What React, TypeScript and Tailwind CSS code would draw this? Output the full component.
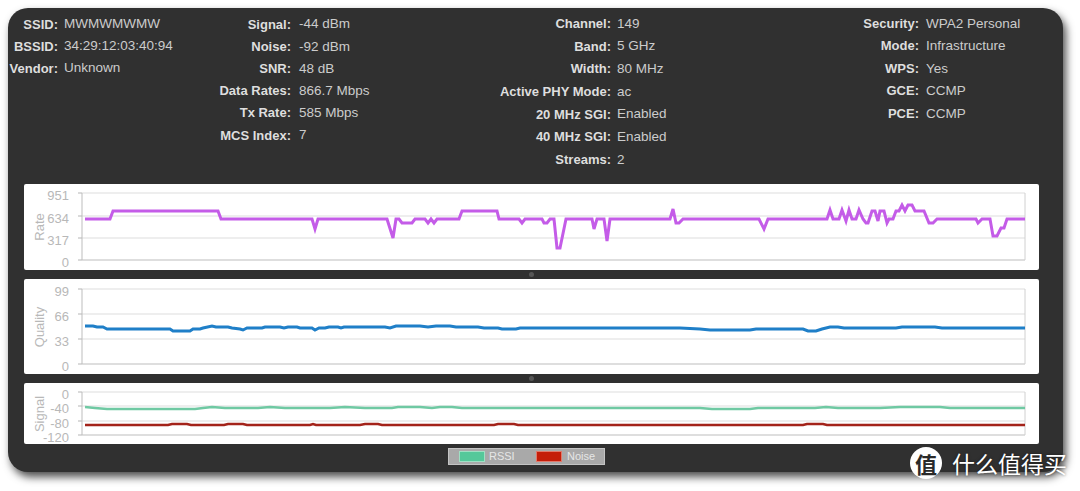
import React from "react";

const sans = "font-['Liberation_Sans',Arial,sans-serif]";

type Row = [string, string];

const col1: Row[] = [
  ["SSID:", "MWMWMWMW"],
  ["BSSID:", "34:29:12:03:40:94"],
  ["Vendor:", "Unknown"],
];
const col2: Row[] = [
  ["Signal:", "-44 dBm"],
  ["Noise:", "-92 dBm"],
  ["SNR:", "48 dB"],
  ["Data Rates:", "866.7 Mbps"],
  ["Tx Rate:", "585 Mbps"],
  ["MCS Index:", "7"],
];
const col3: Row[] = [
  ["Channel:", "149"],
  ["Band:", "5 GHz"],
  ["Width:", "80 MHz"],
  ["Active PHY Mode:", "ac"],
  ["20 MHz SGI:", "Enabled"],
  ["40 MHz SGI:", "Enabled"],
  ["Streams:", "2"],
];
const col4: Row[] = [
  ["Security:", "WPA2 Personal"],
  ["Mode:", "Infrastructure"],
  ["WPS:", "Yes"],
  ["GCE:", "CCMP"],
  ["PCE:", "CCMP"],
];

// chart points are in page pixels, the svg viewBox lines up with them
const ratePts =
  "85,219 110,219 113,211 218,211 221,219 312,219 315,229 318,219 387,219 393,238 396,219 399,219 402,223 412,223 415,219 425,219 428,223 431,219 434,223 437,219 459,219 462,211 497,211 499,219 519,219 522,223 525,219 542,219 544,223 547,223 550,219 554,219 557,248 560,248 566,219 592,219 594,229 597,219 604,219 607,241 610,219 670,219 673,209 676,223 679,223 683,219 759,219 764,229 768,219 827,219 830,210 833,219 839,219 842,210 846,221 849,210 852,219 856,219 859,210 863,219 866,223 868,223 872,211 875,211 878,221 880,211 884,211 887,223 889,219 893,219 896,211 899,211 902,205 905,211 908,205 912,205 915,211 924,211 929,223 933,223 937,219 976,219 978,223 982,219 990,219 993,236 997,236 1001,228 1004,228 1007,219 1025,219";

const qualityPts =
  "85,326 93,326 97,327 103,327 107,329 170,329 173,331 190,331 193,329 200,329 203,328 212,326 216,327 228,327 232,328 240,329 243,330 247,328 262,328 265,327 280,327 284,328 288,327 297,327 300,328 312,328 315,330 319,328 325,328 329,327 338,327 341,328 344,327 385,327 390,328 396,326 420,326 428,327 436,326 450,326 456,327 478,327 484,328 498,328 502,329 516,329 520,328 680,328 700,329 710,330 750,330 756,329 803,329 808,331 816,331 822,329 830,327 838,327 844,328 896,328 902,327 935,327 942,328 1025,328";

const rssiPts =
  "85,407 95,408 107,409 195,409 203,408 212,407 225,408 240,408 258,408 270,407 285,408 330,408 345,407 365,408 380,408 392,408 398,407 420,407 432,408 440,407 452,407 462,408 477,408 700,408 712,409 750,409 758,408 815,408 826,407 838,408 860,408 880,408 900,407 940,407 950,408 1025,408";

const noisePts =
  "85,425 168,425 172,424 187,424 191,425 224,425 228,424 243,424 247,425 310,425 313,424 316,425 360,425 365,424 378,424 382,425 494,425 498,424 514,424 518,425 803,425 807,424 823,424 827,425 1025,425";

function InfoColumn({
  rows,
  width,
  labelClass,
  rowClass,
}: {
  rows: Row[];
  width: string;
  labelClass: string;
  rowClass: string;
}) {
  return (
    <div className={`${width} shrink-0`}>
      {rows.map(([label, value]) => (
        <div key={label} className={`${rowClass} flex items-center leading-none`}>
          <span className={`${labelClass} shrink-0 whitespace-nowrap text-[13px] font-bold text-[#dedede]`}>
            <span className="float-right">{label}</span>
          </span>
          <span className="whitespace-nowrap text-[13.5px] text-[#cccccc]">{value}</span>
        </div>
      ))}
    </div>
  );
}

type Tick = { y: number; label: string };
type Series = { points: string; color: string; width: number };

function Chart({
  top,
  height,
  title,
  titleY,
  ticks,
  series,
  className,
}: {
  top: number;
  height: number;
  title: string;
  titleY: number;
  ticks: Tick[];
  series: Series[];
  className: string;
}) {
  const first = ticks[0].y;
  const last = ticks[ticks.length - 1].y;
  return (
    <div className={`${className} w-[1015px] overflow-hidden rounded-[2px] bg-white`}>
      <svg width={1015} height={height} viewBox={`24 ${top} 1015 ${height}`} className="block">
        {ticks.map((t, i) => (
          <g key={t.label}>
            <line x1={78} x2={82} y1={t.y} y2={t.y} stroke="#b5b5b5" strokeWidth={1} />
            <line
              x1={82}
              x2={1025}
              y1={t.y}
              y2={t.y}
              stroke={i === ticks.length - 1 ? "#bdbdbd" : "#dddddd"}
              strokeWidth={1}
            />
            <text x={69} y={t.y + 6.5} textAnchor="end" fontSize={13} fill="#b8b8b8" fontFamily="'Liberation Sans', Arial, sans-serif">
              {t.label}
            </text>
          </g>
        ))}
        <line x1={82} x2={82} y1={first} y2={last} stroke="#bdbdbd" strokeWidth={1} />
        <line x1={1025} x2={1025} y1={first} y2={last} stroke="#d0d0d0" strokeWidth={1} />
        <text
          x={0}
          y={0}
          textAnchor="middle"
          fontSize={13}
          fill="#b8b8b8"
          fontFamily="'Liberation Sans', Arial, sans-serif"
          transform={`translate(44 ${titleY}) rotate(-90)`}
        >
          {title}
        </text>
        {series.map((s) => (
          <polyline
            key={s.color}
            points={s.points}
            fill="none"
            stroke={s.color}
            strokeWidth={s.width}
            strokeLinejoin="miter"
          />
        ))}
      </svg>
    </div>
  );
}

function Grip() {
  return (
    <div className="flex h-[9px] w-[1015px] items-center justify-center">
      <div className="h-[5px] w-[5px] rounded-full bg-[#565656]" />
    </div>
  );
}

export default function App() {
  return (
    <div className={`${sans} relative h-[491px] w-[1080px] overflow-hidden bg-white`}>
      <div className="pl-[8px] pt-[8px]">
        <div className="h-[464px] w-[1055px] rounded-[20px] bg-[#303030] shadow-[3px_5px_8px_rgba(0,0,0,0.7)]">
          {/* info columns */}
          <div className="flex h-[176px] pt-[5px]">
            <InfoColumn rows={col1} rowClass="h-[22px]" width="w-[200px]" labelClass="w-[50px] mr-[6px]" />
            <InfoColumn rows={col2} rowClass="h-[22.2px]" width="w-[280px]" labelClass="w-[83px] mr-[8px]" />
            <div className="-mt-[1px] flex">
              <InfoColumn rows={col3} rowClass="h-[22.7px]" width="w-[292px]" labelClass="w-[123px] mr-[6px]" />
              <InfoColumn rows={col4} rowClass="h-[22.5px]" width="w-[270px]" labelClass="w-[139px] mr-[7px]" />
            </div>
          </div>

          {/* charts */}
          <div className="flex flex-col pl-[16px]">
            <Chart
              className="h-[86px]"
              top={184}
              height={86}
              title="Rate"
              titleY={227}
              ticks={[
                { y: 193, label: "951" },
                { y: 216, label: "634" },
                { y: 238, label: "317" },
                { y: 260, label: "0" },
              ]}
              series={[{ points: ratePts, color: "#c45ce8", width: 3 }]}
            />
            <Grip />
            <Chart
              className="h-[95px]"
              top={279}
              height={95}
              title="Quality"
              titleY={327}
              ticks={[
                { y: 289, label: "99" },
                { y: 314, label: "66" },
                { y: 339, label: "33" },
                { y: 364, label: "0" },
              ]}
              series={[{ points: qualityPts, color: "#1f7fc8", width: 3 }]}
            />
            <Grip />
            <Chart
              className="h-[61px]"
              top={383}
              height={61}
              title="Signal"
              titleY={414}
              ticks={[
                { y: 392, label: "0" },
                { y: 406, label: "-40" },
                { y: 421, label: "-80" },
                { y: 435, label: "-120" },
              ]}
              series={[
                { points: rssiPts, color: "#6fc9a3", width: 2.5 },
                { points: noisePts, color: "#a3231a", width: 2.5 },
              ]}
            />
            {/* legend */}
            <div className="ml-[424px] mt-[4px] flex h-[17px] w-[157px] items-center border border-[#c4c4c4] bg-[#a9a9a9] pl-[10px] text-[11px] leading-none text-[#e6e6e6]">
              <span className="h-[11px] w-[26px] border border-[#9fe0c4] bg-[#55c89a]" />
              <span className="ml-[4px] w-[47px]">RSSI</span>
              <span className="h-[11px] w-[26px] border border-[#e07a6c] bg-[#c41e0a]" />
              <span className="ml-[5px]">Noise</span>
            </div>
          </div>
        </div>
      </div>

      {/* site watermark */}
      <div className="absolute left-[910px] top-[447px] flex items-center font-['Noto_Sans_CJK_SC',sans-serif]">
        <span className="flex h-[32px] w-[32px] items-center justify-center rounded-full bg-white text-[22px] font-bold leading-none text-[#2a2a2a]">
          值
        </span>
        <span className="ml-[10px] whitespace-nowrap text-[23px] leading-none text-white [text-shadow:0_0_3px_rgba(0,0,0,0.55)]">
          什么值得买
        </span>
      </div>
    </div>
  );
}
